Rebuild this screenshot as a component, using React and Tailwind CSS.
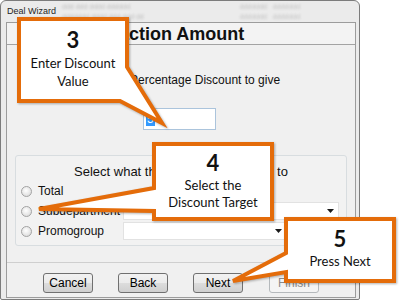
import React from "react";

function Arrow() {
  return (
    <svg width="7" height="4" viewBox="0 0 7 4" className="block">
      <path d="M0 0 H7 L3.5 4 Z" fill="#1a1a1a" />
    </svg>
  );
}

function Radio() {
  return (
    <span className="w-[11px] h-[11px] rounded-full border border-[#a3a3a3] bg-[radial-gradient(circle_at_45%_40%,#ffffff,#d4d4d4)] shrink-0" />
  );
}

function Btn({ children, disabled }) {
  return (
    <div
      className={
        disabled
          ? "w-[50px] h-[20px] rounded-[3px] border border-[#b5b9bc] bg-[#f4f4f4] flex items-center justify-center text-[12px] text-[#8a8a8a]"
          : "w-[50px] h-[20px] rounded-[3px] border border-[#707070] bg-[linear-gradient(#f2f2f2_0%,#ebebeb_50%,#dddddd_50%,#cfcfcf_100%)] flex items-center justify-center text-[12px] text-black"
      }
    >
      {children}
    </div>
  );
}

export default function App() {
  return (
    <div className="relative w-[402px] h-[305px] bg-white overflow-hidden font-['Liberation_Sans',Arial,sans-serif] text-black">
      <div className="w-[360px] h-[300px] bg-[#ebebeb] border border-[#7c7c7c] rounded-t-[6px] rounded-b-[2px] pl-[5px] pr-[3px] pb-[1px] flex flex-col">
        {/* title bar */}
        <div className="h-[21px] shrink-0 flex items-center">
          <span className="ml-[1px] text-[9px] leading-none text-[#1e1e1e]">Deal Wizard</span>
          <div className="ml-[6px] flex flex-col gap-[3px] blur-[1px] text-[7px] leading-[7px] text-[#c0c0c0]">
            <span>ddd ddd dddd dddddd</span>
            <span>ddddddd dddd ddd ddd dd</span>
          </div>
          <div className="ml-[96px] flex flex-col gap-[3px] blur-[1px] text-[7px] leading-[7px] text-[#c4c4c4]">
            <span>ddddddd&nbsp;&nbsp; ddddddd</span>
            <span>ddddddd&nbsp;&nbsp; ddddddd</span>
          </div>
        </div>

        {/* inner panel */}
        <div className="flex-1 border border-[#9c9c9c] bg-[#f0f0f0] flex flex-col">
          <div className="h-[22px] shrink-0 border-b border-[#a3a3a3] bg-[#f3f3f3] flex items-center pl-[64px]">
            <span className="text-[18px] font-bold leading-none text-[#111]">Transaction Amount</span>
          </div>

          <div className="flex-1 flex flex-col">
            <div className="pl-[123px] mt-[28px] text-[12px] leading-[14px] text-[#111]">
              Percentage Discount to give
            </div>
            <div className="ml-[136px] mt-[21px] w-[73px] h-[22px] border border-[#abc4dc] bg-white flex items-center pl-[2px]">
              <span className="bg-[#3399ff] text-white text-[12px] leading-[14px] px-[1px]">5</span>
            </div>

            {/* group box */}
            <div className="mx-[8px] mt-[25px] h-[91px] border border-[#d8dde0] rounded-[3px] bg-[#f2f2f2] flex flex-col">
              <div className="mt-[9px] text-center text-[13px] leading-[14px] text-[#111]">
                Select what the discount is applied to
              </div>
              <div className="mt-[3px] flex flex-col gap-[2px] pl-[5px]">
                <div className="h-[18px] flex items-center">
                  <Radio />
                  <span className="ml-[6px] w-[85px] text-[12px] text-[#111]">Total</span>
                </div>
                <div className="h-[18px] flex items-center">
                  <Radio />
                  <span className="ml-[6px] w-[85px] text-[12px] text-[#111]">Subdepartment</span>
                  <div className="w-[216px] h-[18px] bg-white border border-[#e2e2e2] flex items-center justify-end pr-[4px]">
                    <Arrow />
                  </div>
                </div>
                <div className="h-[18px] flex items-center">
                  <Radio />
                  <span className="ml-[6px] w-[85px] text-[12px] text-[#111]">Promogroup</span>
                  <div className="w-[164px] h-[18px] bg-white border border-[#e2e2e2] flex items-center justify-end pr-[4px]">
                    <Arrow />
                  </div>
                </div>
              </div>
            </div>

            {/* footer */}
            <div className="mt-auto border-t border-[#cfcfcf] pt-[10px] pb-[4px] pl-[36px] flex gap-[25px]">
              <Btn>Cancel</Btn>
              <Btn>Back</Btn>
              <Btn>Next</Btn>
              <div className="ml-[1px]">
                <Btn disabled>Finish</Btn>
              </div>
            </div>
          </div>
        </div>
      </div>

      {/* callouts */}
      <svg
        className="absolute left-0 top-0 pointer-events-none drop-shadow-[1px_1px_1px_rgba(0,0,0,0.3)]"
        width="402"
        height="305"
        viewBox="0 0 402 305"
      >
        <g fill="#ffffff" stroke="#e46c0a" strokeWidth="4" strokeLinejoin="miter" strokeMiterlimit="6">
          <path d="M19 19 H127 V67 L162 123 L120 101 H19 Z" />
          <path d="M154 144 H272 V219 H154 V211 L39 209 L154 188 Z" />
          <path d="M286 219 H394 V281 H286 V272 L233 281 L286 253 Z" />
        </g>
      </svg>

      <div className="absolute left-[17px] top-[28px] w-[112px] flex flex-col items-center font-['Lato',sans-serif] text-[#111]">
        <span className="text-[22px] font-bold leading-[24px]">3</span>
        <span className="mt-[2px] text-[13px] leading-[18px]">Enter Discount</span>
        <span className="text-[13px] leading-[18px]">Value</span>
      </div>

      <div className="absolute left-[152px] top-[151px] w-[122px] flex flex-col items-center font-['Lato',sans-serif] text-[#111]">
        <span className="text-[22px] font-bold leading-[24px]">4</span>
        <span className="mt-[2px] text-[13px] leading-[17px]">Select the</span>
        <span className="text-[13px] leading-[17px]">Discount Target</span>
      </div>

      <div className="absolute left-[284px] top-[227px] w-[112px] flex flex-col items-center font-['Lato',sans-serif] text-[#111]">
        <span className="text-[22px] font-bold leading-[24px]">5</span>
        <span className="mt-[1px] text-[13px] leading-[18px]">Press Next</span>
      </div>
    </div>
  );
}
